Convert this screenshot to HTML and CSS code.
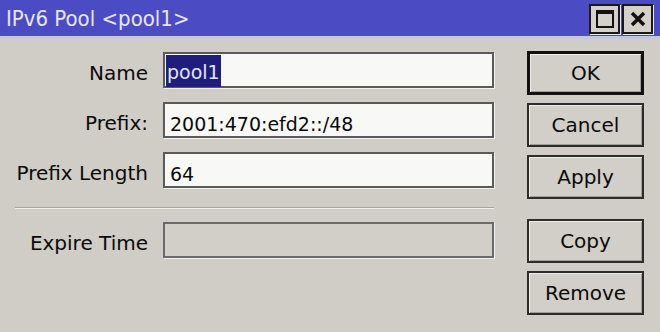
FILE: index.html
```html
<!DOCTYPE html>
<html lang="en">
<head>
    <meta charset="UTF-8">
    <meta name="viewport" content="width=device-width, initial-scale=1.0">
    <title>IPv6 Pool</title>
    <link rel="stylesheet" href="styles.css">
</head>
<body>
    <div class="window">
        <div class="titlebar">
            <span class="title">IPv6 Pool &lt;pool1&gt;</span>
            <div class="controls">
                <span class="ctl">
                    <svg width="20" height="20" viewBox="0 0 20 20">
                        <rect x="2" y="2" width="16" height="16" fill="none" stroke="#111" stroke-width="2"/>
                        <rect x="2" y="2" width="16" height="3" fill="#111"/>
                    </svg>
                </span>
                <span class="ctl">
                    <svg width="20" height="20" viewBox="0 0 20 20">
                        <path d="M4 4 L16 16 M16 4 L4 16" stroke="#111" stroke-width="3.5"/>
                    </svg>
                </span>
            </div>
        </div>
        <div class="content">
            <div class="form">
                <div class="row">
                    <label>Name</label>
                    <div class="field"><span class="sel">pool1</span></div>
                </div>
                <div class="row">
                    <label>Prefix:</label>
                    <div class="field">2001:470:efd2::/48</div>
                </div>
                <div class="row">
                    <label>Prefix Length</label>
                    <div class="field">64</div>
                </div>
                <div class="separator"></div>
                <div class="row">
                    <label>Expire Time</label>
                    <div class="field readonly"></div>
                </div>
            </div>
            <div class="buttons">
                <button class="default">OK</button>
                <button>Cancel</button>
                <button>Apply</button>
                <button class="spaced">Copy</button>
                <button>Remove</button>
            </div>
        </div>
    </div>
</body>
</html>
```

FILE: styles.css
```css
body {
    margin: 0;
    background-color: #d0ccc6;
    font-family: "DejaVu Sans", sans-serif;
    color: #0a0a0a;
    overflow: hidden;
}
.window {
    width: 660px;
    height: 332px;
}
.titlebar {
    height: 36px;
    background-color: #4b4bc3;
    border-bottom: 3px solid #c6c6e2;
    display: flex;
    align-items: center;
    justify-content: space-between;
    padding: 0 7px 0 6px;
}
.title {
    font-family: "DejaVu Sans Condensed", "DejaVu Sans", sans-serif;
    font-size: 22px;
    color: #e6e6f6;
    margin-top: 1px;
}
.controls {
    display: flex;
    gap: 2px;
    margin-top: 1px;
}
.ctl {
    width: 27px;
    height: 26px;
    background-color: #d4d0ca;
    border: 2px solid #1a1a1a;
    box-shadow: 1px 1px 0 #e8e8f4;
    display: flex;
    align-items: center;
    justify-content: center;
}
.content {
    display: flex;
    padding: 12px 0 0 15px;
}
.form {
    width: 479px;
    margin-top: 1px;
}
.row {
    display: grid;
    grid-template-columns: 135px 1fr;
    column-gap: 13px;
    height: 36px;
    margin-bottom: 14px;
}
.row label {
    font-size: 20px;
    line-height: 36px;
    padding-top: 3px;
    text-align: right;
    padding-right: 2px;
    overflow: hidden;
    white-space: nowrap;
}
.field {
    box-sizing: border-box;
    height: 36px;
    background-color: #f8f8f6;
    border: 2px solid #5a5a5a;
    box-shadow: 1px 1px 0 #f2f2f0;
    font-size: 19px;
    line-height: 32px;
    padding: 4px 0 0 5px;
    white-space: nowrap;
}
.field.readonly {
    background-color: #d2cec8;
    border-color: #6a6a6a;
}
.sel {
    display: inline-block;
    background-color: #1e1e7e;
    color: #e4e4f4;
    line-height: 29px;
    padding: 0 1px;
    margin: -3px 0 0 -4px;
    vertical-align: top;
    padding-top: 3px;
}
.separator {
    height: 1px;
    background-color: #a8a49e;
    border-bottom: 1px solid #f0eeea;
    margin: 19px 0 13px;
}
.buttons {
    display: flex;
    flex-direction: column;
    gap: 8px;
    margin-left: 33px;
    width: 117px;
}
button {
    box-sizing: border-box;
    height: 44px;
    width: 117px;
    background-color: #d2cec8;
    border: 2px solid #2c2c2c;
    box-shadow: inset 1px 1px 0 #f0eee9, inset -1px -1px 0 #a09c96;
    font-family: "DejaVu Sans", sans-serif;
    font-size: 20px;
    color: #0a0a0a;
    padding: 0;
}
button.default {
    border: 3px solid #111;
}
button.spaced {
    margin-top: 12px;
}
```
